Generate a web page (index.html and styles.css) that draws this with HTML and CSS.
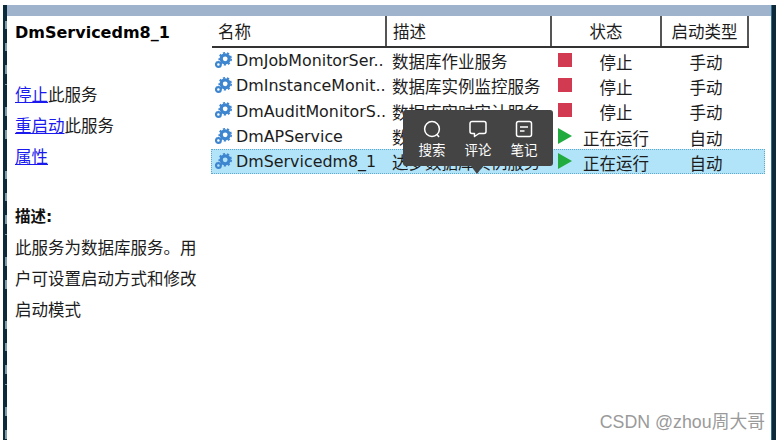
FILE: index.html
```html
<!DOCTYPE html>
<html lang="zh">
<head>
<meta charset="utf-8">
<title>DmServicedm8_1</title>
<link rel="stylesheet" href="styles.css">
</head>
<body>
<svg width="0" height="0" class="defs">
  <defs>
    <symbol id="gear" viewBox="0 0 17 16">
      <circle cx="10.200" cy="6.800" r="4" fill="none" stroke="#3d85cf" stroke-width="3.200"/>
      <circle cx="10.200" cy="6.800" r="6" fill="none" stroke="#3d85cf" stroke-width="1.600" stroke-dasharray="2.200 2"/>
      <circle cx="3.400" cy="12.500" r="2.400" fill="none" stroke="#3d85cf" stroke-width="2.200"/>
    </symbol>
  </defs>
</svg>
<div class="window">
  <div class="edge"></div>
  <div class="main">
    <div class="titlebar"></div>
    <div class="content">
      <aside class="side">
        <h1 class="svc-name">DmServicedm8_1</h1>
        <p class="action first"><a href="#">停止</a>此服务</p>
        <p class="action"><a href="#">重启动</a>此服务</p>
        <p class="action"><a href="#">属性</a></p>
        <h2 class="desc-title">描述:</h2>
        <p class="desc">此服务为数据库服务。用户可设置启动方式和修改启动模式</p>
      </aside>
      <section class="list">
        <div class="row head">
          <div class="c name">名称</div>
          <div class="c descr">描述</div>
          <div class="c state">状态</div>
          <div class="c type">启动类型</div>
        </div>
        <div class="row item">
          <div class="c name"><svg class="gear"><use href="#gear"/></svg><span class="clip">DmJobMonitorSer..</span></div>
          <div class="c descr">数据库作业服务</div>
          <div class="c state"><i class="stop"></i><span class="st">停止</span></div>
          <div class="c type">手动</div>
        </div>
        <div class="row item">
          <div class="c name"><svg class="gear"><use href="#gear"/></svg><span class="clip">DmInstanceMonit..</span></div>
          <div class="c descr">数据库实例监控服务</div>
          <div class="c state"><i class="stop"></i><span class="st">停止</span></div>
          <div class="c type">手动</div>
        </div>
        <div class="row item">
          <div class="c name"><svg class="gear"><use href="#gear"/></svg><span class="clip">DmAuditMonitorS..</span></div>
          <div class="c descr">数据库实时审计服务</div>
          <div class="c state"><i class="stop"></i><span class="st">停止</span></div>
          <div class="c type">手动</div>
        </div>
        <div class="row item">
          <div class="c name"><svg class="gear"><use href="#gear"/></svg><span class="clip">DmAPService</span></div>
          <div class="c descr">数据库接口服务</div>
          <div class="c state"><i class="play"></i><span class="st">正在运行</span></div>
          <div class="c type">自动</div>
        </div>
        <div class="row item selected">
          <div class="c name"><svg class="gear"><use href="#gear"/></svg><span class="clip">DmServicedm8_1</span></div>
          <div class="c descr">达梦数据库实例服务</div>
          <div class="c state"><i class="play"></i><span class="st">正在运行</span></div>
          <div class="c type">自动</div>
        </div>
      </section>
    </div>
  </div>
  <div class="edge right"></div>
</div>
<div class="popup">
  <div class="tool">
    <svg width="24" height="24" viewBox="0 0 24 24" fill="none" stroke="#fff" stroke-width="1.500"><circle cx="12" cy="12" r="7.400"/><path d="M17 17.500l2 2.400"/></svg>
    <span>搜索</span>
  </div>
  <div class="tool">
    <svg width="24" height="24" viewBox="0 0 24 24" fill="none" stroke="#fff" stroke-width="1.500" stroke-linejoin="round"><path d="M6 4.500h12a2 2 0 0 1 2 2v8a2 2 0 0 1-2 2h-5l-4.500 3v-3H6a2 2 0 0 1-2-2v-8a2 2 0 0 1 2-2z"/></svg>
    <span>评论</span>
  </div>
  <div class="tool">
    <svg width="24" height="24" viewBox="0 0 24 24" fill="none" stroke="#fff" stroke-width="1.500"><rect x="4.500" y="4.500" width="15" height="15" rx="2"/><path d="M8 10h8M8 14h4.500"/></svg>
    <span>笔记</span>
  </div>
</div>
<div class="watermark">CSDN @zhou周大哥</div>
</body>
</html>
```
FILE: styles.css
```css
* { box-sizing: border-box; }
html, body { margin: 0; padding: 0; }
body {
  width: 780px;
  height: 440px;
  overflow: hidden;
  position: relative;
  background: #fff;
  color: #1c1c1c;
  font-family: "DejaVu Sans", "Noto Sans CJK SC", sans-serif;
  font-size: 15.900px;
}
.defs { position: absolute; }
.window {
  display: flex;
  height: 435px;
  margin: 5px 4px 0 3px;
}
.edge {
  width: 4px;
  flex: none;
  background:
    linear-gradient(180deg,
      transparent 0 16px, #7f9aa8 16px 24px, transparent 24px 38px,
      #7f9aa8 38px 46px, transparent 46px 60px, #7f9aa8 60px 69px,
      transparent 69px 79px, #7f9aa8 79px 80px, transparent 80px 102px,
      #7f9aa8 102px 111px, transparent 111px 125px, #7f9aa8 125px 134px,
      transparent 134px 150px) 2px 0 / 2px 150px repeat-y,
    #0d2a3a;
}
.edge.right {
  width: 5px;
  background: #0d2a3a;
  border-left: 1px solid #2f6f8c;
}
.main { flex: 1; display: flex; flex-direction: column; min-width: 0; }
.titlebar { height: 11px; background: #a0b3cc; flex: none; }
.content { flex: 1; display: flex; }
.side { width: 204px; flex: none; padding: 7px 0 0 8px; }
.svc-name { margin: 0; font-size: 16px; line-height: 19px; font-weight: 700; color: #000; }
.action { margin: 0; line-height: 31px; height: 31px; font-size: 16.500px; }
.action.first { margin-top: 38px; }
.action a { color: #1a1aee; text-decoration: underline; }
.desc-title { margin: 29px 0 0; font-size: 15.500px; line-height: 31px; font-weight: 700; color: #111; }
.desc { margin: 0; width: 186px; font-size: 16.500px; line-height: 31px; }
.list { flex: 1; display: flex; flex-direction: column; min-width: 0; }
.row { display: flex; }
.c { flex: none; }
.head { height: 32px; margin-left: 1px; width: 537px; border-bottom: 2px solid #333; }
.head .c {
  font-size: 16.500px;
  line-height: 33px;
  border-right: 2px solid #555;
  height: 30px;
  padding-left: 6px;
}
.head .name { width: 175px; }
.head .descr { width: 165px; }
.head .state { width: 110px; }
.head .type { width: 87px; }
.head .state, .head .type { text-align: center; padding-left: 0; }
.item { height: 25.300px; align-items: center; width: 554px; line-height: 25px; }
.item .name { display: flex; align-items: center; padding-left: 4px; width: 181px; }
.gear { width: 17px; height: 16px; flex: none; margin-right: 4px; margin-top: -2px; }
.clip { white-space: nowrap; }
.item .descr { width: 166px; font-size: 16.500px; margin-top: 4px; }
.item .state { display: flex; align-items: center; width: 102px; font-size: 16.500px; }
.item .type { width: 92px; font-size: 16.500px; text-align: center; margin-top: 5px; }
.stop { display: block; width: 14px; height: 14px; background: #d13a50; flex: none; margin-top: -2px; }
.play {
  display: block; width: 0; height: 0; flex: none; margin-top: -2px;
  border-style: solid;
  border-width: 8px 0 8px 14px;
  border-color: transparent transparent transparent #22ab3f;
}
.st { width: 88px; text-align: center; margin-top: 5px; }
.selected { background: #b2e4f9; outline: 1px dotted #5fa8c8; outline-offset: -1px; }
.popup {
  position: absolute;
  left: 403px;
  top: 110px;
  width: 150px;
  height: 56px;
  background: #444;
  border-radius: 3px;
  display: flex;
  justify-content: center;
  gap: 16px;
  padding-top: 7px;
  color: #fff;
  font-family: "Noto Sans CJK SC", sans-serif;
  font-size: 13.500px;
}
.popup::after {
  content: "";
  position: absolute;
  left: 68px;
  top: 56px;
  border-style: solid;
  border-width: 8px 6px 0 6px;
  border-color: #444 transparent transparent transparent;
}
.tool { display: flex; flex-direction: column; align-items: center; width: 30px; }
.tool svg { display: block; }
.tool span { line-height: 16px; white-space: nowrap; }
.watermark {
  position: absolute;
  right: 15px;
  top: 411px;
  font-family: "Liberation Sans", "Noto Sans CJK SC", sans-serif;
  font-size: 17.800px;
  line-height: 22px;
  color: #9a9a9a;
}
```
